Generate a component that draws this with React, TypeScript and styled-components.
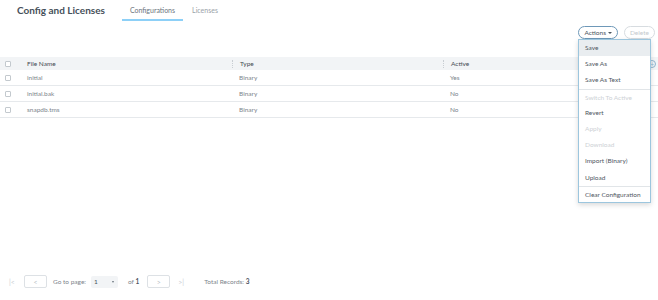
import React from "react";
import styled, { createGlobalStyle } from "styled-components";

const Global = createGlobalStyle`
  html, body { margin: 0; padding: 0; background: #fff; }
  body { font-family: Lato, "Open Sans", sans-serif; color: #555; }
  * { box-sizing: border-box; }
`;

const Page = styled.div`
  width: 658px;
  height: 300px;
  display: flex;
  flex-direction: column;
  position: relative;
  overflow: hidden;
`;

const Header = styled.div`
  display: flex;
  align-items: flex-start;
  height: 21px;
  padding-left: 17px;
`;

const Title = styled.div`
  font-size: 10px;
  font-weight: 700;
  color: #46505a;
  line-height: 12px;
  padding-top: 4px;
  margin-right: 17px;
`;

const Tab = styled.div<{ $active?: boolean }>`
  font-size: 7px;
  line-height: 8px;
  color: ${(p) => (p.$active ? "#6b747d" : "#9aa2a9")};
  padding: 6px 8px 0;
  height: 21px;
  border-bottom: 2px solid ${(p) => (p.$active ? "#8dd0f7" : "transparent")};
  margin-right: 1px;
`;

const Toolbar = styled.div`
  display: flex;
  justify-content: flex-end;
  gap: 6px;
  padding: 5px 3px 0 0;
  height: 36px;
  position: relative;
`;

const Pill = styled.div<{ $disabled?: boolean }>`
  height: 13px;
  border-radius: 7px;
  border: 1px solid ${(p) => (p.$disabled ? "#d7dce0" : "#6e98b8")};
  font-size: 6.5px;
  line-height: 11px;
  padding: 0 5px;
  color: ${(p) => (p.$disabled ? "#c4c9cd" : "#4a545e")};
  display: flex;
  align-items: center;
  gap: 2px;
  background: #fff;
`;

const Caret = styled.span`
  width: 0;
  height: 0;
  border-left: 2px solid transparent;
  border-right: 2px solid transparent;
  border-top: 2.5px solid #4a545e;
`;

const Menu = styled.div`
  position: absolute;
  top: 39px;
  left: 578px;
  width: 73px;
  background: #fff;
  border: 1px solid #9cc6de;
  box-shadow: 0 2px 5px rgba(0, 0, 0, 0.15);
  z-index: 5;
`;

const MenuItem = styled.div<{ $disabled?: boolean; $hover?: boolean; $sep?: boolean }>`
  height: 16.2px;
  font-size: 6.5px;
  line-height: 16px;
  padding-left: 6px;
  white-space: nowrap;
  color: ${(p) => (p.$disabled ? "#cdd1d5" : "#4f575f")};
  background: ${(p) => (p.$hover ? "#e9edf0" : "transparent")};
  border-top: ${(p) => (p.$sep ? "1px solid #e1e5e8" : "none")};
`;

const Table = styled.div`
  display: flex;
  flex-direction: column;
  position: relative;
`;

const Row = styled.div<{ $head?: boolean }>`
  display: grid;
  grid-template-columns: 27px 205px 211px 1fr;
  height: ${(p) => (p.$head ? "13px" : "16px")};
  align-items: center;
  background: ${(p) => (p.$head ? "#f2f4f6" : "#fff")};
  border-bottom: ${(p) => (p.$head ? "none" : "1px solid #e6e9ec")};
  font-size: 6.5px;
  color: ${(p) => (p.$head ? "#444b52" : "#7d858c")};
`;

const CheckCell = styled.div`
  display: flex;
  padding-left: 5px;
`;

const Box = styled.span`
  width: 6px;
  height: 6px;
  border: 1px solid #c3c9ce;
  border-radius: 1px;
  background: #fff;
`;

const Cell = styled.div<{ $sep?: boolean }>`
  padding-left: ${(p) => (p.$sep ? "7px" : "0")};
  border-left: ${(p) => (p.$sep ? "1px dotted #c9ced3" : "none")};
  line-height: 8px;
`;

const PlainCell = styled.div`
  padding-left: 7px;
  line-height: 8px;
`;

const ColIcon = styled.span`
  position: absolute;
  right: 2px;
  top: 3px;
  width: 8px;
  height: 8px;
  border: 1px solid #8fb5cf;
  border-radius: 50%;
  font-size: 7px;
  line-height: 6px;
  text-align: center;
  color: #8fb5cf;
`;

const Footer = styled.div`
  margin-top: auto;
  height: 29px;
  display: flex;
  align-items: center;
  padding-left: 9px;
  font-size: 6.5px;
  color: #7d858c;
  padding-bottom: 8px;
`;

const EdgeGlyph = styled.span<{ $right?: boolean }>`
  color: #c9ced3;
  font-size: 7px;
  width: 15px;
  margin-left: ${(p) => (p.$right ? "8px" : "0")};
`;

const PageBtn = styled.div`
  width: 23px;
  height: 13px;
  border: 1px solid #dde1e5;
  border-radius: 2px;
  display: flex;
  align-items: center;
  justify-content: center;
  color: #b9c0c6;
  font-size: 7px;
`;

const Label = styled.span`
  margin: 0 5px 0 6px;
`;

const Select = styled.div`
  width: 27px;
  height: 12px;
  background: #f2f4f6;
  border-radius: 2px;
  display: flex;
  align-items: center;
  justify-content: space-between;
  padding: 0 4px 0 3px;
  color: #4a545e;
  margin-right: 10px;
`;

const SmallCaret = styled.span`
  border-left: 1.5px solid transparent;
  border-right: 1.5px solid transparent;
  border-top: 2px solid #6a737c;
`;

const Of = styled.span`
  margin-right: 8px;
  b { color: #4a545e; font-weight: 700; }
`;

const Total = styled.span`
  margin-left: 11px;
  b { color: #4a545e; font-weight: 700; }
`;

const rows = [
  ["initial", "Binary", "Yes"],
  ["initial.bak", "Binary", "No"],
  ["snapdb.tms", "Binary", "No"],
];

const items: { t: string; d?: boolean; sep?: boolean }[] = [
  { t: "Save" },
  { t: "Save As" },
  { t: "Save As Text" },
  { t: "Switch To Active", d: true, sep: true },
  { t: "Revert" },
  { t: "Apply", d: true },
  { t: "Download", d: true },
  { t: "Import (Binary)" },
  { t: "Upload" },
  { t: "Clear Configuration", sep: true },
];

export default function App() {
  return (
    <Page>
      <Global />
      <Header>
        <Title>Config and Licenses</Title>
        <Tab $active>Configurations</Tab>
        <Tab>Licenses</Tab>
      </Header>
      <Toolbar>
        <Pill>
          Actions <Caret />
        </Pill>
        <Pill $disabled>Delete</Pill>
      </Toolbar>
      <Table>
        <Row $head>
          <CheckCell><Box /></CheckCell>
          <Cell>File Name</Cell>
          <Cell $sep>Type</Cell>
          <Cell $sep>Active</Cell>
        </Row>
        {rows.map((r) => (
          <Row key={r[0]}>
            <CheckCell><Box /></CheckCell>
            <Cell>{r[0]}</Cell>
            <PlainCell>{r[1]}</PlainCell>
            <PlainCell>{r[2]}</PlainCell>
          </Row>
        ))}
        <ColIcon>+</ColIcon>
      </Table>
      <Menu>
        {items.map((it, i) => (
          <MenuItem key={it.t} $disabled={it.d} $sep={it.sep} $hover={i === 0}>
            {it.t}
          </MenuItem>
        ))}
      </Menu>
      <Footer>
        <EdgeGlyph>|&lt;</EdgeGlyph>
        <PageBtn>&lt;</PageBtn>
        <Label>Go to page:</Label>
        <Select>1 <SmallCaret /></Select>
        <Of>of <b>1</b></Of>
        <PageBtn>&gt;</PageBtn>
        <EdgeGlyph $right>&gt;|</EdgeGlyph>
        <Total>Total Records: <b>3</b></Total>
      </Footer>
    </Page>
  );
}
